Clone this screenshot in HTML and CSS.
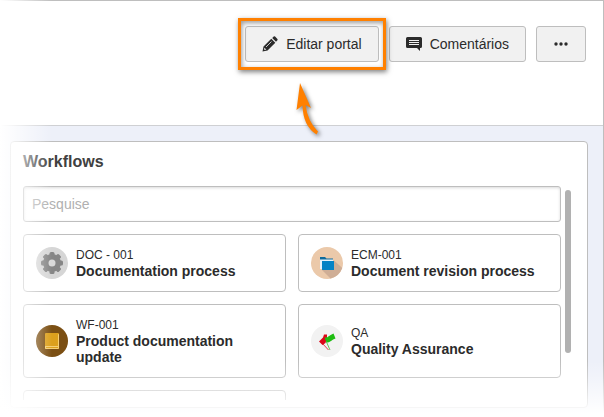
FILE: index.html
```html
<!DOCTYPE html>
<html lang="pt">
<head>
<meta charset="utf-8">
<title>Portal</title>
<link rel="stylesheet" href="styles.css">
</head>
<body>
<div class="page">
  <header class="toolbar">
    <div class="callout">
      <button class="btn" type="button">
        <svg class="icon" viewBox="0 0 16 16" aria-hidden="true"><path fill="#2b2b2b" d="M.5 15.500 1.500 10.500 9.300 2.700 13.300 6.700 5.500 14.500ZM10.200 1.900 11.700.500Q12.400 0 13.100.600L15.400 2.900Q16 3.600 15.400 4.300L14 5.800Z"/><path stroke="#f1f1f1" stroke-width=".8" d="M4 11 9.500 5.500"/><path fill="#f1f1f1" d="M2.500 11.800 4.200 13.500 2.800 14 2 13.200Z"/></svg>
        Editar portal
      </button>
      <svg class="arrow" viewBox="0 0 32 60" aria-hidden="true"><path fill="#ff8000" d="M8 4 19 29 13.500 26Q16 43 26 52.500L24.500 55.500Q11 47 10.500 26.500L4.500 31Z"/></svg>
    </div>
    <button class="btn" type="button">
      <svg class="icon" viewBox="0 0 16 16" aria-hidden="true"><path fill="#2b2b2b" d="M1.500 1H14.500Q16 1 16 2.500V10.500Q16 12 14.500 12H14V15L11 12H1.500Q0 12 0 10.500V2.500Q0 1 1.500 1Z"/><path stroke="#f1f1f1" d="M3 4.500H13M3 6.500H13M3 8.500H13"/></svg>
      Comentários
    </button>
    <button class="btn btn-more" type="button" aria-label="Mais">
      <svg class="icon" viewBox="0 0 16 16" aria-hidden="true"><g fill="#2b2b2b"><circle cx="3" cy="8" r="1.700"/><circle cx="8" cy="8" r="1.700"/><circle cx="13" cy="8" r="1.700"/></g></svg>
    </button>
  </header>
  <main class="content">
    <section class="panel">
      <h2 class="title">Workflows</h2>
      <div class="scroller">
        <input class="search" type="text" placeholder="Pesquise" aria-label="Pesquise">
        <div class="cards">
          <a class="card" href="#">
            <svg class="avatar" viewBox="0 0 32 32" aria-hidden="true"><circle cx="16" cy="16" r="16" fill="#d6d6d6"/><g fill="#868686"><circle cx="16" cy="16" r="9"/><g id="teeth"><rect x="13.500" y="5" width="5" height="22" rx="1.500"/><rect x="5" y="13.500" width="22" height="5" rx="1.500"/></g><use href="#teeth" transform="rotate(45 16 16)"/></g><circle cx="16" cy="16" r="3.500" fill="#d9d9d9"/></svg>
            <span class="label"><span class="code">DOC - 001</span><strong class="name">Documentation process</strong></span>
          </a>
          <a class="card" href="#">
            <svg class="avatar" viewBox="0 0 32 32" aria-hidden="true"><circle cx="16" cy="16" r="16" fill="#ebc9aa"/><path fill="#cfae96" d="M23 13.500 31.300 21Q28 29.500 19.500 31.600L11 23Z"/><path fill="#0d6a9c" d="M9 10H14L15.500 11.500H22V14H9Z"/><path fill="#e8f3fa" d="M9 12.500H22V14H11V22H9Z"/><path fill="#0683c5" d="M11 14H23V23H11Z"/></svg>
            <span class="label"><span class="code">ECM-001</span><strong class="name">Document revision process</strong></span>
          </a>
          <a class="card" href="#">
            <svg class="avatar" viewBox="0 0 32 32" aria-hidden="true"><circle cx="16" cy="16" r="16" fill="#7b4f13"/><rect x="9" y="8" width="14" height="16" rx="1" fill="#dca01d"/><path fill="#f6cf74" d="M9 21H22V9Q23 9 23 10V23Q23 24 22 24H10Q9 24 9 23Z"/><path stroke="#dca01d" d="M10 22.500H22"/></svg>
            <span class="label"><span class="code">WF-001</span><strong class="name">Product documentation update</strong></span>
          </a>
          <a class="card" href="#">
            <svg class="avatar" viewBox="0 0 32 32" aria-hidden="true"><circle cx="16" cy="16" r="16" fill="#f2f2f2"/><path stroke="#e04050" d="M11 18 17.500 25"/><path stroke="#65c95c" d="M15.500 17 19 25"/><path fill="#dc0718" d="M8 16.500 12 12.500 13 9.500 16 9.500 16 13 14.500 18 11.500 20Z"/><path fill="#1fbd12" d="M13.500 12.500Q16 13 18 11 20 9.500 22.500 8.500L24.500 13.500Q22 14 20 16 18 17.500 15.500 17.500Z"/></svg>
            <span class="label"><span class="code">QA</span><strong class="name">Quality Assurance</strong></span>
          </a>
          <a class="card" href="#" aria-label="Workflow"></a>
        </div>
      </div>
      <div class="thumb"></div>
    </section>
  </main>
</div>
</body>
</html>
```
FILE: styles.css
```css
* {
  box-sizing: border-box;
}

body {
  margin: 0;
  background: #fff;
  color: #2b2b2b;
  font-family: "Liberation Sans", Arial, sans-serif;
  font-size: 14px;
}

.page {
  position: relative;
  display: flex;
  flex-direction: column;
  height: 100vh;
  min-height: 320px;
  border-top: 1px solid #bebebe;
  border-right: 1px solid #bebebe;
  background: #edf0f9;
}

/* white fade along the left and bottom edges */
.page::after {
  content: "";
  position: absolute;
  inset: -1px -1px 0 0;
  pointer-events: none;
  background:
    linear-gradient(to right, #fff, rgba(255, 255, 255, 0.8) 12px, rgba(255, 255, 255, 0) 52px),
    linear-gradient(to top, #fff 4px, rgba(255, 255, 255, 0.85) 10px, rgba(255, 255, 255, 0.25) 40px, rgba(255, 255, 255, 0) 56px);
}

.toolbar {
  display: flex;
  justify-content: flex-end;
  gap: 10px;
  padding: 25px 17px 63px;
  border-bottom: 1px solid #cfd0d3;
  background: #fff;
}

.btn {
  display: flex;
  align-items: center;
  gap: 8px;
  height: 36px;
  padding: 0 16px;
  border: 1px solid #bebebe;
  border-radius: 3px;
  background: #f1f1f1;
  color: #2b2b2b;
  font: inherit;
}

.icon {
  width: 16px;
  height: 16px;
}

.btn-more {
  width: 50px;
}

.callout {
  position: relative;
}

.callout::after {
  content: "";
  position: absolute;
  inset: -8px -7px;
  border: 3px solid #ff8000;
  box-shadow: 1px 2px 5px rgba(0, 0, 0, 0.5), inset 1px 2px 5px rgba(0, 0, 0, 0.4);
  pointer-events: none;
}

.arrow {
  position: absolute;
  top: 53px;
  left: 47px;
  z-index: 1;
  width: 32px;
  height: 60px;
  filter: drop-shadow(2px 2px 2px rgba(0, 0, 0, 0.5));
}

.content {
  flex: 1;
  display: flex;
  min-height: 0;
  padding: 15px 15px 9px 10px;
}

.panel {
  position: relative;
  flex: 1;
  display: flex;
  flex-direction: column;
  min-width: 0;
  padding: 10px 26px 7px 12px;
  border: 1px solid #bebebe;
  border-radius: 4px;
  background: #fff;
}

.title {
  margin: 0 0 14px;
  color: #404040;
  font-size: 16px;
  line-height: 20px;
}

.scroller {
  flex: 1;
  min-height: 0;
  overflow: hidden;
}

.search {
  display: block;
  width: 100%;
  height: 36px;
  margin: 0 0 12px;
  padding: 0 8px;
  border: 1px solid #bebebe;
  border-radius: 3px;
  background: #fff;
  box-shadow: inset 0 1px 3px rgba(0, 0, 0, 0.15);
  font: inherit;
}

.search::placeholder {
  color: #b0b0b0;
  opacity: 1;
}

.cards {
  display: grid;
  grid-template-columns: 1fr 1fr;
  gap: 12px;
}

.card {
  display: flex;
  align-items: center;
  gap: 8px;
  min-height: 58px;
  padding: 12px;
  border: 1px solid #bebebe;
  border-radius: 4px;
  color: inherit;
  text-decoration: none;
}

.avatar {
  flex: none;
  width: 32px;
  height: 32px;
}

.label {
  display: flex;
  flex-direction: column;
}

.code {
  font-size: 12px;
  line-height: 16px;
}

.name {
  line-height: 16px;
}

.thumb {
  position: absolute;
  top: 48px;
  right: 16px;
  width: 6px;
  height: 163px;
  border-radius: 3px;
  background: #b1b1b1;
}
```
